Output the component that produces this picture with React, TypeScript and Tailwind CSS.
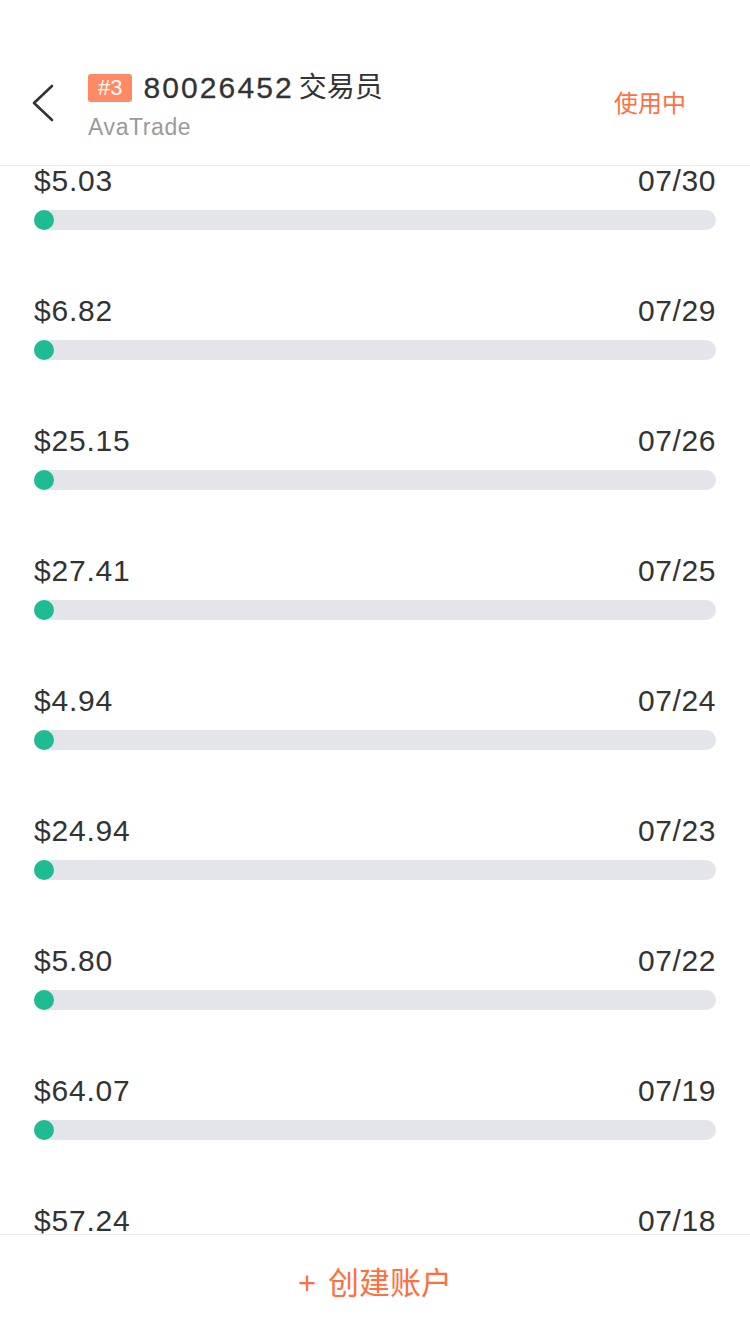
const ROWS = [
  { amount: "$5.03", date: "07/30" },
  { amount: "$6.82", date: "07/29" },
  { amount: "$25.15", date: "07/26" },
  { amount: "$27.41", date: "07/25" },
  { amount: "$4.94", date: "07/24" },
  { amount: "$24.94", date: "07/23" },
  { amount: "$5.80", date: "07/22" },
  { amount: "$64.07", date: "07/19" },
  { amount: "$57.24", date: "07/18" },
];

const FONT = { fontFamily: '"Liberation Sans", "Noto Sans CJK SC", sans-serif' };

function Row({ amount, date }: { amount: string; date: string }) {
  return (
    <div className="px-[34px] pb-[60px]">
      <div className="flex h-[40px] items-center justify-between text-[30px] text-[#333333]">
        <span className="tracking-[0.8px]">{amount}</span>
        <span className="tracking-[0.6px]">{date}</span>
      </div>
      <div className="mt-[10px] h-[20px] rounded-full bg-[#e4e5ea]">
        <div className="h-[20px] w-[20px] rounded-full bg-[#1fbb93]" />
      </div>
    </div>
  );
}

export default function App() {
  return (
    <div className="flex h-[1334px] w-[750px] flex-col overflow-hidden bg-white" style={FONT}>
      {/* Header */}
      <div className="flex h-[166px] shrink-0 items-start border-b border-[#ececec] pt-[72px]">
        <svg className="ml-[30px] mt-[12px]" width="26" height="38" viewBox="0 0 26 38" fill="none">
          <polyline points="22,2 4,19 22,36" stroke="#333333" strokeWidth="2.6" strokeLinecap="round" strokeLinejoin="round" />
        </svg>
        <div className="ml-[32px] flex-1">
          <div className="flex items-center">
            <span className="rounded-[3px] bg-[#fd8a62] px-[10px] text-[22px] leading-[28px] text-white">#3</span>
            <span className="ml-[11px] text-[30px] leading-[32px] tracking-[2.1px] text-[#333333] [-webkit-text-stroke:0.3px_#333333]">80026452</span>
            <span className="ml-[5px] text-[28px] leading-[32px] text-[#333333]">交易员</span>
          </div>
          <div className="mt-[10px] text-[23px] leading-[26px] tracking-[0.6px] text-[#9b9b9b]">AvaTrade</div>
        </div>
        <div className="mr-[64px] mt-[14px] text-[24px] text-[#ff6f3f]">使用中</div>
      </div>

      {/* List */}
      <div className="flex-1 overflow-hidden">
        <div className="-mt-[6px]">
          {ROWS.map((r) => (
            <Row key={r.date} amount={r.amount} date={r.date} />
          ))}
        </div>
      </div>

      {/* Footer */}
      <div className="flex h-[100px] shrink-0 items-center justify-center border-t border-[#ececec] text-[#ff6f3f]">
        <span className="text-[31px]">+</span>
        <span className="ml-[12px] text-[31px]">创建账户</span>
      </div>
    </div>
  );
}
